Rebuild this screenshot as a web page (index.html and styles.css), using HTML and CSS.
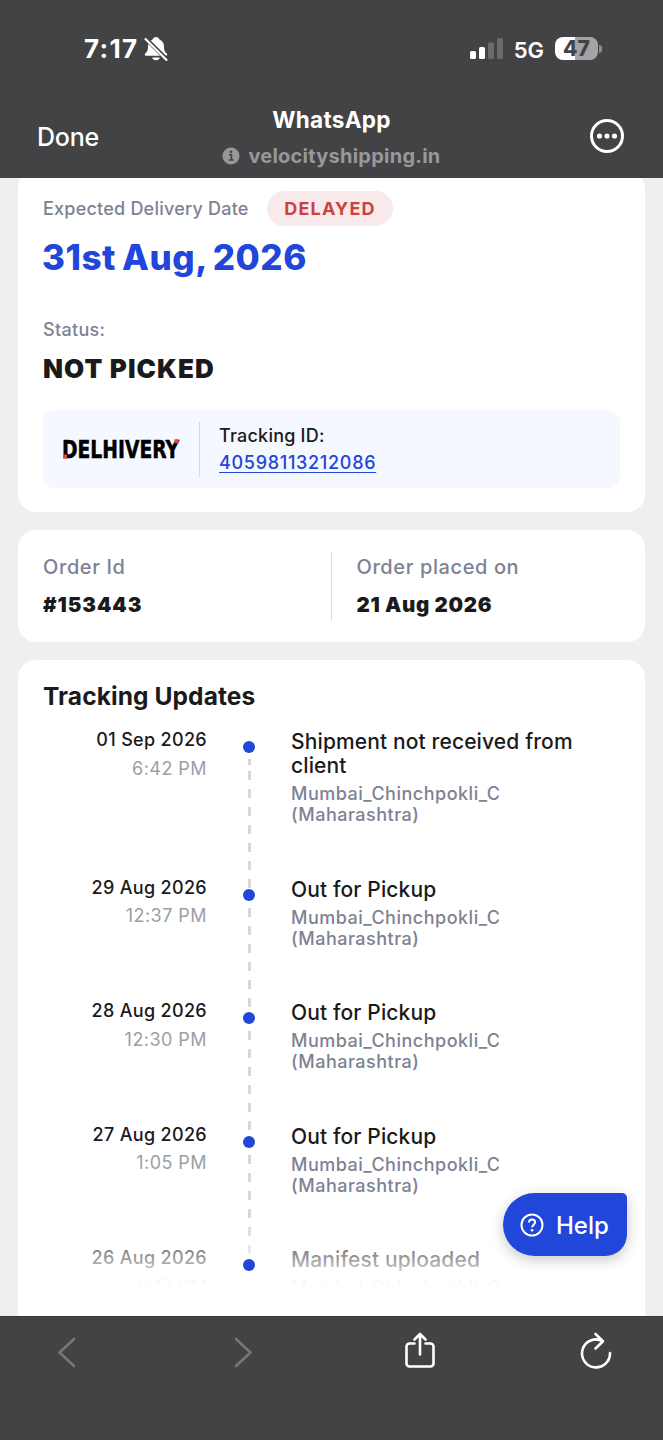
FILE: index.html
```html
<!DOCTYPE html>
<html lang="en">
<head>
<meta charset="utf-8">
<title>Track shipment</title>
<link rel="stylesheet" href="styles.css">
</head>
<body>
<div class="screen">
  <header class="chrome">
    <div class="statusbar">
      <div class="clock"><span class="clock-text">7:17</span>
        <svg width="24" height="26" viewBox="0 0 24 26"><path fill="#fff" d="M12 1c-1.800 0-3 1.100-3.400 2.500C5.400 4.700 4 7.300 4 10.500c0 4-.8 5.200-2.800 7.100-.9.9-.5 2.100.9 2.100h19.800c1.400 0 1.800-1.200.9-2.100-2-1.900-2.800-3.100-2.800-7.100 0-3.200-1.400-5.800-4.600-7C15 2.100 13.800 1 12 1zM8.200 21.400h7.600c-.3 1.700-1.800 2.800-3.800 2.800s-3.500-1.100-3.800-2.800z"/><path d="M0 .8 24 24.800" stroke="#434345" stroke-width="4.200"/><path d="M1.500 3 22.500 24" stroke="#fff" stroke-width="2.100" stroke-linecap="round"/></svg>
      </div>
      <div class="signals">
        <svg width="33" height="22" viewBox="0 0 33 22"><g fill="#fff"><rect y="13" width="6" height="8" rx="1.500"/><rect x="9" y="9" width="6" height="12" rx="1.500"/></g><g fill="#6b6b6d"><rect x="18" y="4.500" width="6" height="16.500" rx="1.500"/><rect x="27" width="6" height="21" rx="1.500"/></g></svg>
        <span class="network">5G</span>
        <span class="battery">47</span><span class="nub"></span>
      </div>
    </div>
    <div class="navbar">
      <span class="done">Done</span>
      <div class="site">
        <div class="site-title">WhatsApp</div>
        <div class="site-host"><svg width="18" height="18" viewBox="0 0 18 18"><circle cx="9" cy="9" r="8.500" fill="#98989a"/><circle cx="9" cy="4.800" r="1.400" fill="#434345"/><path d="M7 7.800h2.400v5M6.800 13h5" fill="none" stroke="#434345" stroke-width="1.600"/></svg><span>velocityshipping.in</span></div>
      </div>
      <svg class="more" width="34" height="34" viewBox="0 0 34 34"><circle cx="17" cy="17" r="15.500" fill="none" stroke="#fff" stroke-width="3"/><g fill="#fff"><circle cx="9.500" cy="17" r="2.600"/><circle cx="17" cy="17" r="2.600"/><circle cx="24.500" cy="17" r="2.600"/></g></svg>
    </div>
  </header>
  <main class="page">
    <section class="card summary">
      <div class="eta-row"><span class="label eta-label">Expected Delivery Date</span><span class="pill">DELAYED</span></div>
      <div class="eta">31st Aug, 2026</div>
      <div class="label status-label">Status:</div>
      <div class="status">NOT PICKED</div>
      <div class="carrier">
        <svg class="logo" width="124" height="40" viewBox="-1 0 124 40"><text class="logo-text" x="0" y="29.300" textLength="117" lengthAdjust="spacingAndGlyphs">DELHIVERY</text><rect x="1" y="25.500" width="4" height="4" fill="#e8453c"/><rect x="112.500" y="10.300" width="4" height="4" fill="#e8453c"/></svg>
        <div class="tracking"><div class="tracking-label">Tracking ID:</div><a class="track-link">40598113212086</a></div>
      </div>
    </section>
    <section class="card order">
      <div class="order-cell"><div class="order-label">Order Id</div><div class="order-value order-id">#153443</div></div>
      <div class="order-cell placed"><div class="order-label">Order placed on</div><div class="order-value">21 Aug 2026</div></div>
    </section>
    <section class="card updates">
      <h2 class="heading">Tracking Updates</h2>
      <div class="event"><div class="when"><div>01 Sep 2026</div><div class="time">6:42 PM</div></div><div class="rail first"></div><div class="what"><div class="title">Shipment not received from client</div><div class="place">Mumbai_Chinchpokli_C (Maharashtra)</div></div></div>
      <div class="event"><div class="when"><div>29 Aug 2026</div><div class="time">12:37 PM</div></div><div class="rail"></div><div class="what"><div class="title">Out for Pickup</div><div class="place">Mumbai_Chinchpokli_C (Maharashtra)</div></div></div>
      <div class="event"><div class="when"><div>28 Aug 2026</div><div class="time">12:30 PM</div></div><div class="rail"></div><div class="what"><div class="title">Out for Pickup</div><div class="place">Mumbai_Chinchpokli_C (Maharashtra)</div></div></div>
      <div class="event"><div class="when"><div>27 Aug 2026</div><div class="time">1:05 PM</div></div><div class="rail"></div><div class="what"><div class="title">Out for Pickup</div><div class="place">Mumbai_Chinchpokli_C (Maharashtra)</div></div></div>
      <div class="event last"><div class="when"><div>26 Aug 2026</div><div class="time">6:17 PM</div></div><div class="rail"></div><div class="what"><div class="title">Manifest uploaded</div><div class="place">Mumbai_Chinchpokli_C</div></div></div>
      <div class="fade"></div>
    </section>
    <div class="help"><svg width="24" height="24" viewBox="0 0 24 24" fill="none" stroke="#fff" stroke-width="2"><circle cx="12" cy="12" r="10.500"/><path d="M8.900 9.500C9 7.600 10.300 6.600 12 6.600s3.100 1 3.100 2.700c0 2.300-3 2.500-3 5"/><circle cx="12.100" cy="17.200" r="1.300" fill="#fff" stroke="none"/></svg><span>Help</span></div>
  </main>
  <footer class="toolbar">
    <svg width="34" height="38" viewBox="0 0 34 38" fill="none" stroke="#77777a" stroke-width="2.600" stroke-linecap="round" stroke-linejoin="round"><path d="M24 7 9.500 20.500 24 34"/></svg>
    <svg width="34" height="38" viewBox="0 0 34 38" fill="none" stroke="#77777a" stroke-width="2.600" stroke-linecap="round" stroke-linejoin="round"><path d="M10 7 24.500 20.500 10 34"/></svg>
    <svg width="34" height="38" viewBox="0 0 34 38" fill="none" stroke="#fff" stroke-width="2.600" stroke-linecap="round" stroke-linejoin="round"><path d="M11.500 11.500H6.500a3 3 0 0 0-3 3v17a3 3 0 0 0 3 3h21a3 3 0 0 0 3-3v-17a3 3 0 0 0-3-3H22.500M17 22.500V2M11.500 7.500 17 2l5.500 5.500"/></svg>
    <svg width="34" height="38" viewBox="0 0 34 38" fill="none" stroke="#fff" stroke-width="2.600" stroke-linecap="round" stroke-linejoin="round"><path d="M31 21A14 14 0 1 1 23.500 9M16.500 2l7.500 7.200-7.500 7.300"/></svg>
  </footer>
</div>
</body>
</html>
```
FILE: styles.css
```css
* { box-sizing: border-box; }
body { margin: 0; font-family: Inter, "Liberation Sans", sans-serif; color: #1a1a1c; }
svg { display: block; flex: none; }
.screen { width: 663px; height: 1440px; display: flex; flex-direction: column; overflow: hidden; }

.chrome { height: 178px; flex: none; background: #434345; color: #fff; }
.statusbar { height: 98px; display: flex; justify-content: space-between; padding: 36px 61px 0 84px; }
.clock { display: flex; height: 26px; align-items: center; gap: 6px; }
.clock-text { font-size: 26px; font-weight: 700; line-height: 26px; letter-spacing: 1.300px; width: 54px; white-space: nowrap; }
.signals { display: flex; height: 26px; align-items: center; }
.network { font-size: 22px; font-weight: 600; line-height: 26px; margin: 1px 11px 0 11px; }
.battery { width: 43px; height: 23px; border-radius: 8px; background: linear-gradient(90deg, #fff 47%, #a3a3a5 47%); color: #434345; font-size: 21px; font-weight: 800; line-height: 23px; text-align: center; margin-top: -1px; }
.nub { width: 3px; height: 8px; border-radius: 0 4px 4px 0; background: #8b8b8d; margin-left: 1px; }
.navbar { display: grid; grid-template-columns: 120px 1fr 120px; padding: 0 39px 0 37px; }
.done { font-size: 25px; font-weight: 500; line-height: 30px; padding-top: 24px; letter-spacing: -0.200px; }
.site { display: flex; flex-direction: column; align-items: center; padding: 8px 0 0 2px; }
.site-title { font-size: 22.500px; font-weight: 700; line-height: 28px; letter-spacing: 0.300px; }
.site-host { display: flex; align-items: center; gap: 8px; font-size: 20px; font-weight: 700; line-height: 28px; letter-spacing: 0.240px; color: #98989a; margin-top: 8px; }
.more { justify-self: end; margin-top: 21px; }

.page { position: relative; height: 1138px; flex: none; overflow: hidden; background: #efefef; padding: 0 18px; }
.card { background: #fff; border-radius: 18px; margin-bottom: 18px; }
.label { font-size: 18px; font-weight: 500; line-height: 22px; letter-spacing: 0.300px; color: #7d8293; }
.eta-label { width: 206px; letter-spacing: 0.220px; white-space: nowrap; }
.summary { margin-top: -8px; height: 342px; padding: 21px 25px 24px; }
.eta-row { display: flex; align-items: center; gap: 18px; }
.pill { height: 35px; width: 126px; border-radius: 18px; background: #f8eaea; color: #c9433f; font-size: 18px; font-weight: 700; letter-spacing: 1.200px; line-height: 36px; text-align: center; }
.eta { font-size: 35px; font-weight: 800; line-height: 40px; margin: 11px 0 0 -1px; letter-spacing: 0.520px; word-spacing: -2px; color: #2046da; }
.status-label { margin-top: 42px; }
.status { font-size: 26px; font-weight: 900; line-height: 32px; margin-top: 12px; letter-spacing: 1.100px; }
.carrier { height: 78px; margin-top: 25px; padding: 11px 18px; display: flex; align-items: center; border-radius: 12px; background: #f5f8fe; }
.logo { overflow: visible; }
.logo-text { font-family: "DejaVu Sans Condensed", "DejaVu Sans", sans-serif; font-size: 25.500px; font-weight: 700; fill: #000; stroke: #000; stroke-width: 0.500px; }
.tracking { margin-left: 14px; padding-left: 19px; border-left: 1px solid #d4d7de; font-size: 18px; font-weight: 500; line-height: 27px; height: 55px; }
.tracking-label { letter-spacing: 0.220px; }
.track-link { letter-spacing: 0.700px; color: #2046da; text-decoration: underline; text-underline-offset: 3px; }

.order { display: flex; height: 111.500px; padding: 22px 25px 21px; }
.order-cell { width: 289px; }
.placed { border-left: 1.500px solid #dcdde0; padding-left: 24px; }
.order-label { font-size: 20px; font-weight: 500; line-height: 30px; letter-spacing: 0.600px; color: #7d8293; }
.order-value { font-size: 20.500px; font-weight: 900; line-height: 30px; margin-top: 7.500px; letter-spacing: 0.650px; white-space: nowrap; }
.order-id { letter-spacing: 0.950px; }

.updates { position: relative; height: 700px; padding: 21.500px 25px 0; }
.heading { margin: 0 0 19px; font-size: 24.500px; font-weight: 700; line-height: 30px; letter-spacing: 0.100px; }
.event { display: grid; grid-template-columns: 164px 84px 1fr; }
.when { margin-top: -1px; text-align: right; font-size: 18px; font-weight: 500; line-height: 21px; letter-spacing: 0.320px; }
.time { margin-top: 7.500px; font-weight: 400; letter-spacing: 0.450px; color: #9a9fa8; }
.rail { position: relative; }
.rail::before { content: ""; position: absolute; z-index: 2; left: 36px; top: 11px; width: 12px; height: 12px; border-radius: 50%; background: #2046da; }
.rail::after { content: ""; position: absolute; left: 40.500px; top: 30px; width: 3px; height: 99px; background: repeating-linear-gradient(180deg, #d8d8db 0 9px, transparent 9px 18px); }
.rail.first::after { top: 29px; height: 130px; background: linear-gradient(#d8d8db, #d8d8db) 0 0 / 3px 6px no-repeat, repeating-linear-gradient(180deg, #d8d8db 0 9px, transparent 9px 18px) 0 12px / 3px 118px no-repeat; }
.last .rail::after { content: none; }
.what { padding-bottom: 52.500px; }
.title { font-size: 21px; font-weight: 500; line-height: 24px; letter-spacing: 0.130px; }
.place { margin-top: 5px; font-size: 18px; font-weight: 500; line-height: 21px; letter-spacing: 0.500px; color: #7d8293; }
.fade { position: absolute; z-index: 1; left: 0; right: 0; top: 557px; height: 99px; background: linear-gradient(180deg, rgba(255,255,255,0), rgba(255,255,255,.58) 43%, rgba(255,255,255,.9) 62%, #fff 71%); }

.help { position: absolute; z-index: 3; left: 503px; top: 1015px; width: 124px; height: 63px; border-radius: 32px 5px 22px 32px; background: #2046da; color: #fff; display: flex; align-items: center; gap: 12px; padding: 1px 0 0 17px; font-size: 24px; font-weight: 500; box-shadow: 0 4px 14px rgba(0,0,0,.22); }
.toolbar { height: 124px; flex: none; background: #434345; border-top: 1px solid #39393b; display: flex; justify-content: space-between; padding: 15px 50px; }
```
